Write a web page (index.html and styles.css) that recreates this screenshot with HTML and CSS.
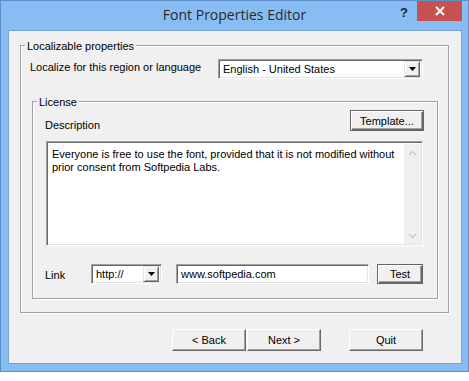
FILE: index.html
```html
<!DOCTYPE html>
<html>
<head>
<meta charset="utf-8">
<link rel="stylesheet" href="styles.css">
</head>
<body>
<div class="window">
  <div class="titlebar">
    <div class="title">Font Properties Editor</div>
    <div class="help">?</div>
    <div class="close">
      <svg width="10" height="10" viewBox="0 0 10 10"><path d="M1 1 L9 9 M9 1 L1 9" stroke="#fff" stroke-width="2"/></svg>
    </div>
  </div>
  <div class="client">
    <div class="group outer">
      <div class="legend">Localizable properties</div>
      <div class="row locale-row">
        <span class="label locale-label">Localize for this region or language</span>
        <div class="combo locale-combo">
          <span class="combo-text">English - United States</span>
          <span class="drop"><svg width="7" height="4" viewBox="0 0 7 4"><path d="M0 0 H7 L3.5 4 Z" fill="#000"/></svg></span>
        </div>
      </div>
      <div class="group inner">
        <div class="legend">License</div>
        <div class="row desc-row">
          <span class="label desc-label">Description</span>
          <button class="btn default template">Template...</button>
        </div>
        <div class="memo">
          <div class="memo-text">Everyone is free to use the font, provided that it is not modified without prior consent from Softpedia Labs.</div>
          <div class="vscroll">
            <svg width="9" height="6" viewBox="0 0 9 6"><path d="M1 5 L4.5 1.5 L8 5" fill="none" stroke="#c8c8c8" stroke-width="1.3"/></svg>
            <svg width="9" height="6" viewBox="0 0 9 6"><path d="M1 1 L4.5 4.5 L8 1" fill="none" stroke="#c8c8c8" stroke-width="1.3"/></svg>
          </div>
        </div>
        <div class="row link-row">
          <span class="label link-label">Link</span>
          <div class="combo proto-combo">
            <span class="combo-text">http://</span>
            <span class="drop"><svg width="7" height="4" viewBox="0 0 7 4"><path d="M0 0 H7 L3.5 4 Z" fill="#000"/></svg></span>
          </div>
          <div class="textbox url">www.softpedia.com</div>
          <button class="btn default test">Test</button>
        </div>
      </div>
    </div>
    <div class="row buttons">
      <button class="btn nav">&lt; Back</button>
      <button class="btn nav">Next &gt;</button>
      <button class="btn nav quit">Quit</button>
    </div>
  </div>
</div>
</body>
</html>
```

FILE: styles.css
```css
* { box-sizing: border-box; }
html, body { margin: 0; padding: 0; background: #fff; }
body {
  font-family: "Liberation Sans", Arial, sans-serif;
  font-size: 11px;
  color: #000;
}
.window {
  width: 469px;
  height: 372px;
  background: #88bdf4;
  border: 1px solid #5f8fcb;
  display: flex;
  flex-direction: column;
}
.titlebar {
  height: 29px;
  display: flex;
  align-items: flex-start;
}
.title {
  flex: 1;
  text-align: center;
  font-family: "Open Sans", "Noto Sans", sans-serif;
  font-size: 14px;
  line-height: 20px;
  padding-top: 4px;
  padding-left: 79px;
  color: #2a2a2a;
}
.help {
  width: 28px;
  font-family: "Liberation Sans", Arial, sans-serif;
  font-weight: bold;
  font-size: 13px;
  line-height: 14px;
  padding-top: 5px;
  padding-left: 11px;
  color: #222;
  text-align: left;
}
.close {
  width: 45px;
  height: 20px;
  margin-right: 6px;
  background: #c75050;
  display: flex;
  align-items: center;
  justify-content: center;
}
.client {
  margin: 0 6px 0 7px;
  height: 334px;
  background: #f0f0f0;
  border: 1px solid #7aa3d3;
}
.group {
  border: 1px solid #a0a0a0;
  box-shadow: 1px 1px 0 #fff, inset 1px 1px 0 #fff;
}
.legend {
  width: fit-content;
  background: #f0f0f0;
  line-height: 14px;
  padding: 0 2px;
  margin: -7px 0 0 4px;
}
.outer {
  margin: 14px 0 0 11px;
  width: 429px;
  height: 268px;
}
.inner {
  margin: 22px 0 0 11px;
  width: 406px;
  height: 198px;
}
.row { display: flex; align-items: flex-start; }
.label { line-height: 14px; }
.locale-row { margin: 6px 0 0 9px; }
.locale-label { width: 188px; margin-top: 1px; }
.combo {
  height: 20px;
  background: #fff;
  border: 1px solid;
  border-color: #a0a0a0 #fff #fff #a0a0a0;
  box-shadow: inset 1px 1px 0 #696969, inset -1px -1px 0 #e3e3e3;
  display: flex;
  align-items: center;
  padding: 2px;
}
.combo-text { flex: 1; padding-left: 2px; line-height: 14px; }
.drop {
  width: 16px;
  height: 16px;
  background: #f0f0f0;
  border: 1px solid;
  border-color: #e3e3e3 #696969 #696969 #e3e3e3;
  box-shadow: inset 1px 1px 0 #fff, inset -1px -1px 0 #a0a0a0;
  display: flex;
  align-items: center;
  justify-content: center;
}
.locale-combo { width: 205px; }
.desc-row { margin: 1px 0 0 12px; width: 379px; justify-content: space-between; }
.desc-label { margin-top: 8px; }
.btn {
  font-family: "Liberation Sans", Arial, sans-serif;
  font-size: 11px;
  color: #000;
  background: #f0f0f0;
  border: 1px solid;
  border-color: #fff #696969 #696969 #fff;
  box-shadow: inset -1px -1px 0 #a0a0a0;
  padding: 0;
  margin: 0;
  height: 22px;
  width: 74px;
}
.btn.default {
  border: 1px solid #646464;
  box-shadow: inset 1px 1px 0 #fff, inset -1px -1px 0 #696969, inset -2px -2px 0 #a0a0a0;
}
.template { height: 21px; }
.memo {
  margin: 9px 0 0 13px;
  width: 377px;
  height: 105px;
  background: #fff;
  border: 1px solid;
  border-color: #a0a0a0 #fff #fff #a0a0a0;
  box-shadow: inset 1px 1px 0 #696969, inset -1px -1px 0 #e3e3e3;
  display: flex;
  padding: 2px 1px 1px 2px;
}
.memo-text {
  flex: 1;
  padding: 4px 4px 0 3px;
  line-height: 13px;
}
.vscroll {
  width: 17px;
  background: #f0f0f0;
  display: flex;
  flex-direction: column;
  justify-content: space-between;
  align-items: center;
  padding: 6px 0 5px;
}
.link-row { margin: 18px 0 0 12px; }
.link-label { width: 46px; margin-top: 4px; }
.proto-combo { width: 71px; }
.textbox {
  margin-left: 14px;
  width: 193px;
  height: 20px;
  background: #fff;
  border: 1px solid;
  border-color: #a0a0a0 #fff #fff #a0a0a0;
  box-shadow: inset 1px 1px 0 #696969, inset -1px -1px 0 #e3e3e3;
  padding: 2px 4px;
  line-height: 14px;
}
.test { margin-left: 8px; width: 46px; height: 20px; }
.buttons { margin: 16px 0 0 163px; }
.nav { width: 74px; height: 22px; }
.nav + .nav { margin-left: 1px; }
.quit { margin-left: 28px !important; }
```
